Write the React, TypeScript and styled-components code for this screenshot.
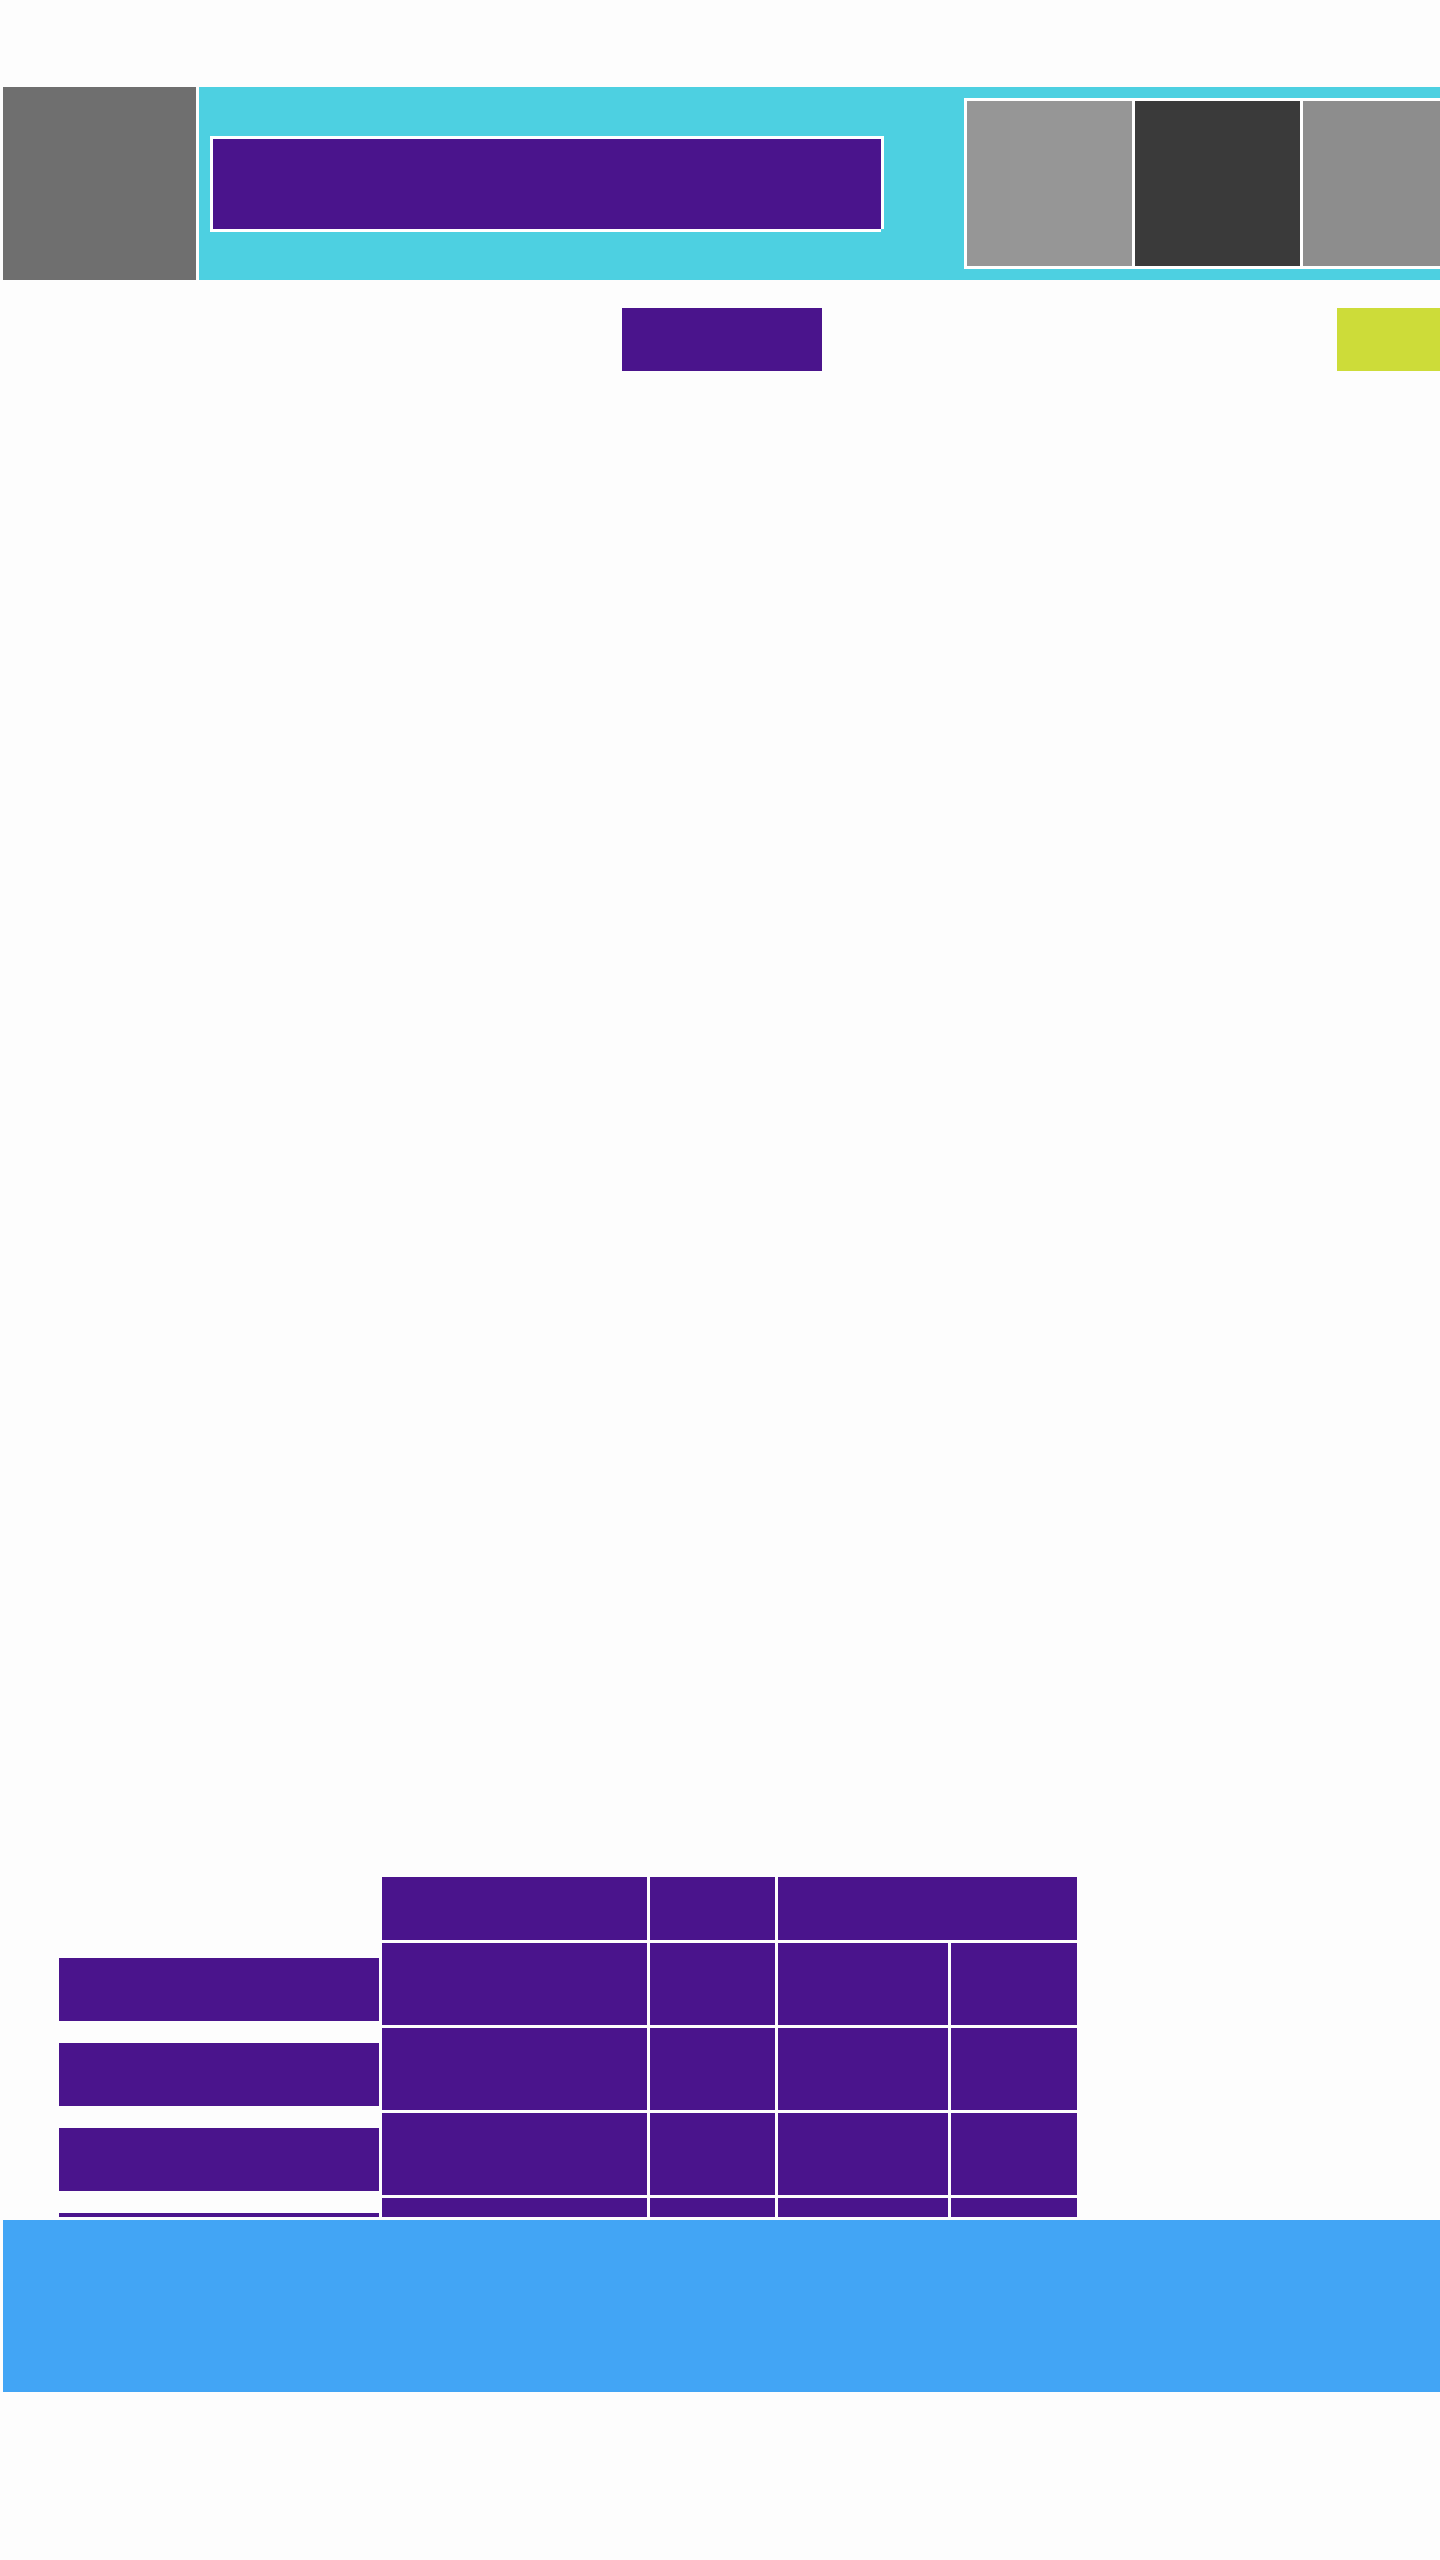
import styled, { createGlobalStyle } from "styled-components";

const Global = createGlobalStyle`
  html, body { margin: 0; padding: 0; background: #fdfdfd; font-family: "Liberation Sans", Arial, sans-serif; }
  body { overflow: hidden; }
`;

const Page = styled.div`
  width: 1440px;
  min-height: 2560px;
  box-sizing: border-box;
  padding: 87px 0 0 3px;
  overflow: hidden;
`;

const Header = styled.header`
  display: flex;
  gap: 3px;
  height: 193px;
  width: 1500px;
`;

const Logo = styled.div`
  flex: 0 0 193px;
  background: #6f6f6f;
`;

const Banner = styled.div`
  flex: 1;
  display: flex;
  align-items: center;
  background: #4dd0e1;
  padding-left: 14px;
`;

const Search = styled.div`
  flex: 0 0 668px;
  height: 90px;
  margin-right: 83px;
  background: #4a148c;
  box-shadow: -3px -3px 0 #fff, 3px -3px 0 #fff, -3px 3px 0 #fff, 3px 0 0 #fff, 0 3px 0 #fff;
`;

const Tiles = styled.div`
  display: flex;
  gap: 3px;
  padding: 3px;
  background: #fff;
  flex-shrink: 0;
`;

const Tile = styled.div<{ $c: string }>`
  width: 165px;
  height: 165px;
  background: ${(p) => p.$c};
`;

const Actions = styled.nav`
  display: flex;
  gap: 515px;
  margin-top: 28px;
  padding-left: 619px;
  width: 1500px;
`;

const Action = styled.button<{ $c: string }>`
  flex: 0 0 200px;
  height: 63px;
  border: none;
  padding: 0;
  background: ${(p) => p.$c};
`;

const TableSection = styled.section`
  display: flex;
  gap: 3px;
  margin-top: 1506px;
  padding-left: 56px;
  height: 340px;
  overflow: hidden;
`;

const Labels = styled.div`
  display: flex;
  flex-direction: column;
  gap: 22px;
  width: 320px;
  padding-top: 81px;
`;

const Label = styled.div`
  flex: 0 0 63px;
  background: #4a148c;
`;

const Grid = styled.div`
  display: grid;
  grid-template-columns: 265px 125px 170px 126px;
  grid-template-rows: 63px;
  grid-auto-rows: 82px;
  gap: 3px;
  align-content: start;
`;

const Cell = styled.div<{ $span?: number }>`
  background: #4a148c;
  grid-column: span ${(p) => p.$span ?? 1};
`;

const Footer = styled.footer`
  margin-top: 3px;
  height: 172px;
  width: 1500px;
  background: #42a5f5;
`;

const rows = [0, 1, 2, 3, 4];

export default function App() {
  return (
    <Page>
      <Global />
      <Header>
        <Logo />
        <Banner>
          <Search />
          <Tiles>
            <Tile $c="#969696" />
            <Tile $c="#3a3a3a" />
            <Tile $c="#8d8d8d" />
          </Tiles>
        </Banner>
      </Header>
      <Actions>
        <Action $c="#4a148c" aria-label="primary" />
        <Action $c="#cddc39" aria-label="secondary" />
      </Actions>
      <TableSection>
        <Labels>
          {rows.map((r) => (
            <Label key={r} />
          ))}
        </Labels>
        <Grid>
          <Cell />
          <Cell />
          <Cell $span={2} />
          {rows.map((r) => [
            <Cell key={r + "a"} />,
            <Cell key={r + "b"} />,
            <Cell key={r + "c"} />,
            <Cell key={r + "d"} />,
          ])}
        </Grid>
      </TableSection>
      <Footer />
    </Page>
  );
}
